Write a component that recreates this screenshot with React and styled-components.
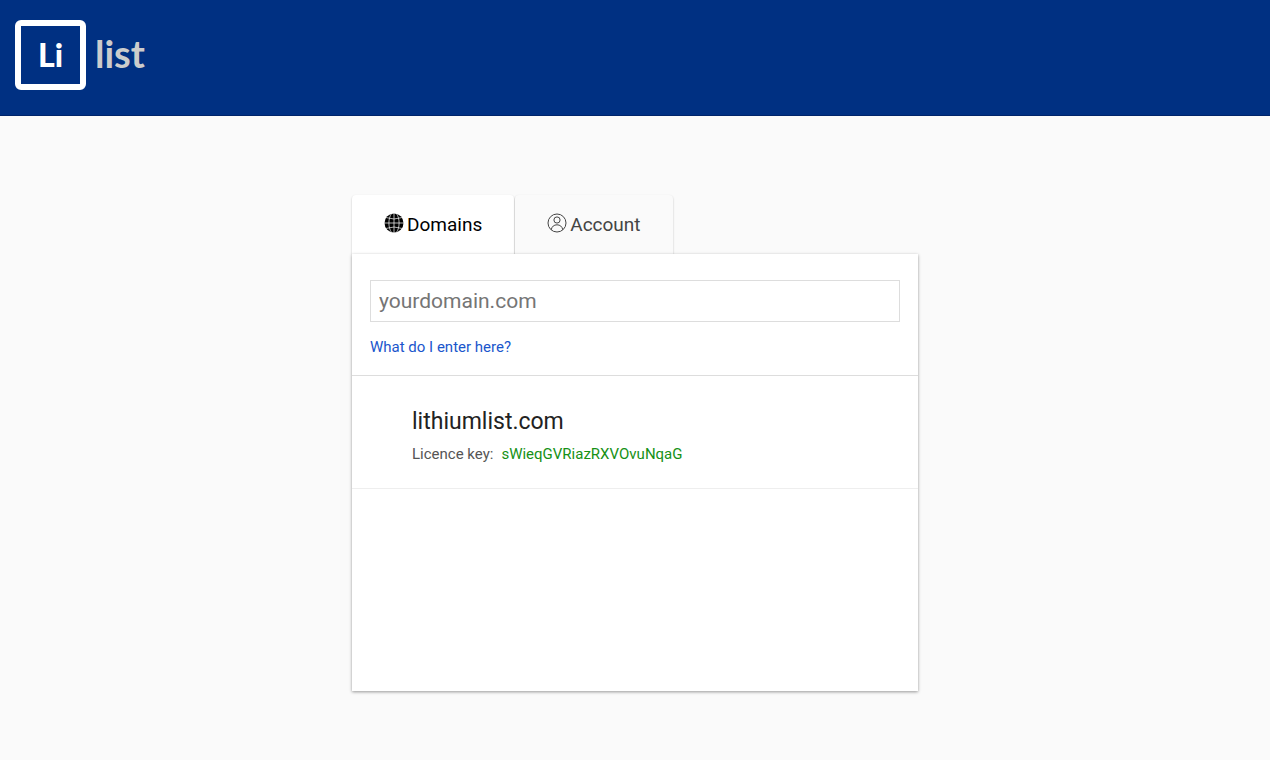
import React, { useState } from 'react'
import styled, { createGlobalStyle } from 'styled-components'

const domains = [{ name: 'lithiumlist.com', licence: 'sWieqGVRiazRXVOvuNqaG' }]

const GlobeIcon = () => (
  <svg width='20' height='20' viewBox='0 0 20 20' aria-hidden='true'>
    <circle cx='10' cy='10' r='9.5' fill='#000' />
    <g fill='none' stroke='#fff' strokeWidth='0.7'>
      <path d='M10 0v20M0 10h20M2.2 4.6Q10 7.4 17.8 4.6M2.2 15.4Q10 12.6 17.8 15.4' />
      <path d='M7.6 0.5C4 5 4 15 7.6 19.5M12.4 0.5C16 5 16 15 12.4 19.5' />
    </g>
  </svg>
)

const AccountIcon = () => (
  <svg
    width='20'
    height='20'
    viewBox='0 0 20 20'
    fill='none'
    stroke='currentColor'
    aria-hidden='true'
  >
    <circle cx='10' cy='10' r='9' />
    <circle cx='10' cy='7' r='3.1' />
    <path d='M4.2 16.8C4.8 13.5 7 11.8 10 11.8s5.2 1.7 5.8 5' />
  </svg>
)

const App = () => {
  const [tab, setTab] = useState('domains')
  const [domain, setDomain] = useState('')

  return (
    <>
      <GlobalStyle />
      <Header>
        <Logo href='#'>
          <LogoMark>Li</LogoMark>
          <LogoText>list</LogoText>
        </Logo>
      </Header>
      <Main>
        <Tabs role='tablist'>
          <Tab
            type='button'
            role='tab'
            aria-selected={tab === 'domains'}
            $active={tab === 'domains'}
            onClick={() => setTab('domains')}
          >
            <GlobeIcon />
            Domains
          </Tab>
          <Tab
            type='button'
            role='tab'
            aria-selected={tab === 'account'}
            $active={tab === 'account'}
            onClick={() => setTab('account')}
          >
            <AccountIcon />
            Account
          </Tab>
        </Tabs>
        <Panel role='tabpanel'>
          {tab === 'domains' && (
            <>
              <AddDomain onSubmit={(e) => e.preventDefault()}>
                <DomainInput
                  type='text'
                  aria-label='Domain'
                  placeholder='yourdomain.com'
                  value={domain}
                  onChange={(e) => setDomain(e.target.value)}
                />
                <HelpLink href='#help'>What do I enter here?</HelpLink>
              </AddDomain>
              <DomainList>
                {domains.map(({ name, licence }) => (
                  <DomainItem key={name}>
                    <DomainName>{name}</DomainName>
                    <Licence>
                      <span>Licence key:</span>
                      <LicenceKey>{licence}</LicenceKey>
                    </Licence>
                  </DomainItem>
                ))}
              </DomainList>
            </>
          )}
        </Panel>
      </Main>
    </>
  )
}

export default App

const GlobalStyle = createGlobalStyle`
  * {
    box-sizing: border-box;
  }

  body {
    margin: 0;
    background: #fafafa;
    color: #222;
    font-family: Roboto, 'Liberation Sans', sans-serif;
    font-size: 15px;
    -webkit-font-smoothing: antialiased;
  }
`

const Header = styled.header`
  display: flex;
  padding: 20px 15px 25px;
  background: #003082;
  border-bottom: 1px solid #00246a;
`

const Logo = styled.a`
  display: flex;
  gap: 9px;
  font-family: Lato, sans-serif;
  font-weight: 700;
  text-decoration: none;
`

const LogoMark = styled.span`
  display: flex;
  align-items: center;
  justify-content: center;
  width: 71px;
  height: 70px;
  padding-bottom: 2px;
  border: 6px solid #fff;
  border-radius: 6px;
  color: #fff;
  font-size: 32px;
  font-weight: 900;
`

const LogoText = styled.span`
  color: #ccc;
  font-size: 38px;
  line-height: 66px;
`

const Main = styled.main`
  max-width: 566px;
  margin: 79px auto 68px;
`

const Tabs = styled.div`
  display: flex;
  gap: 1px;
`

const Tab = styled.button`
  display: flex;
  align-items: center;
  gap: 3px;
  height: 59px;
  padding: 0 32px;
  border: 0;
  border-radius: 4px 4px 0 0;
  background: ${({ $active }) => ($active ? '#fff' : '#fafafa')};
  color: ${({ $active }) => ($active ? '#000' : '#444')};
  box-shadow: 0 1px 2px rgba(0, 0, 0, 0.25);
  font-family: inherit;
  font-size: 19px;
  cursor: pointer;

  svg {
    margin-bottom: 3px;
  }
`

const Panel = styled.section`
  position: relative;
  min-height: 437px;
  background: #fff;
  box-shadow: 0 1px 3px rgba(0, 0, 0, 0.4);
`

const AddDomain = styled.form`
  padding: 26px 18px 19px;
  border-bottom: 1px solid #ddd;
`

const DomainInput = styled.input`
  display: block;
  width: 100%;
  height: 42px;
  margin-bottom: 16px;
  padding: 0 8px;
  border: 1px solid #ddd;
  color: #222;
  font-family: inherit;
  font-size: 21px;

  &::placeholder {
    color: #757575;
  }
`

const HelpLink = styled.a`
  display: block;
  color: #1a56cc;
  line-height: 18px;
  text-decoration: none;
`

const DomainList = styled.ul`
  margin: 0;
  padding: 0;
  list-style: none;
`

const DomainItem = styled.li`
  padding: 31px 60px 25px;
  border-bottom: 1px solid #eee;
`

const DomainName = styled.h2`
  margin: 0 0 8px;
  font-size: 23px;
  font-weight: 400;
  line-height: 30px;
`

const Licence = styled.p`
  display: flex;
  gap: 8px;
  margin: 0;
  color: #555;
  line-height: 18px;
`

const LicenceKey = styled.span`
  color: #169116;
`
